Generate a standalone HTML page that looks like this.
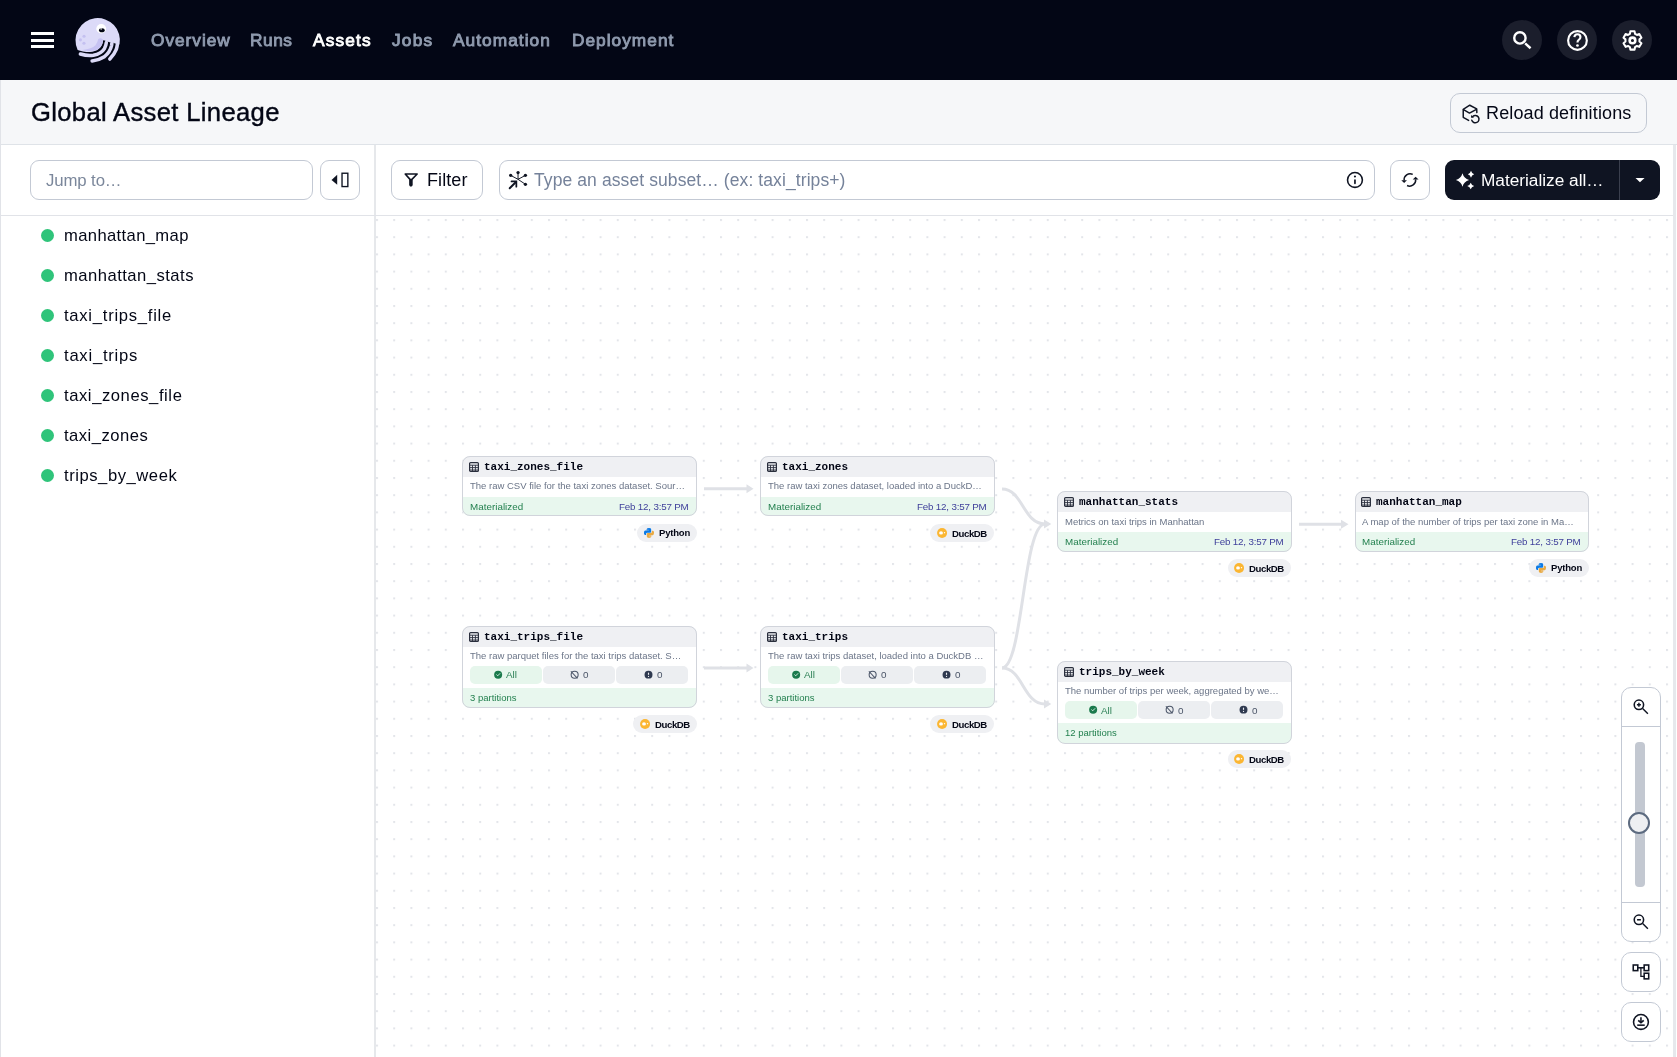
<!DOCTYPE html><html><head><meta charset="utf-8"><style>
*{box-sizing:border-box;margin:0;padding:0}
html,body{-webkit-font-smoothing:antialiased;width:1677px;height:1057px;overflow:hidden;background:#fff;font-family:"Liberation Sans",sans-serif;color:#030615}
.a{position:absolute;white-space:nowrap}
.t{will-change:transform}
svg.a{overflow:visible}
</style></head><body>
<div class="a" style="left:0;top:0;width:1677px;height:80px;background:#030615"></div>
<div class="a" style="left:31px;top:32px;width:23px;height:3px;background:#fff"></div>
<div class="a" style="left:31px;top:38.5px;width:23px;height:3px;background:#fff"></div>
<div class="a" style="left:31px;top:45px;width:23px;height:3px;background:#fff"></div>
<svg class="a" style="left:70px;top:12px" width="55" height="55" viewBox="0 0 1057 1057">
<path d="M147 728 A427 427 0 1 1 952 625 L880 612 Q840 585 760 580 Q700 565 640 540 C625 690 520 768 380 768 C290 768 200 750 147 728Z" fill="#dcdaf8"/>
<path d="M545 520 Q600 480 640 540 Q615 700 480 742 Q330 765 240 730 Q420 712 490 640 Q530 580 545 520Z" fill="#c6c2f2"/>
<g fill="none" stroke="#dcdaf8" stroke-width="68" stroke-linecap="round">
<path d="M200 808 Q330 848 450 833 Q600 803 662 703 Q692 643 698 588"/>
<path d="M425 940 Q560 925 660 860 Q770 770 800 640 L805 600"/>
<path d="M765 905 Q850 820 890 720 Q905 670 910 625"/>
</g>
<circle cx="270" cy="465" r="30" fill="#c4c0f0"/><circle cx="200" cy="535" r="30" fill="#c4c0f0"/><circle cx="268" cy="600" r="30" fill="#c4c0f0"/>
<ellipse cx="600" cy="322" rx="95" ry="90" fill="#fff"/>
<ellipse cx="612" cy="350" rx="55" ry="40" fill="#030615"/>
<circle cx="598" cy="328" r="14" fill="#fff"/>
</svg>
<div class="a t" style="left:150.50px;top:28.80px;font-size:17.3px;line-height:22px;color:#8f9aae;letter-spacing:0.966px;-webkit-text-stroke:0.9px #8f9aae;">Overview</div>
<div class="a t" style="left:250.00px;top:28.80px;font-size:17.3px;line-height:22px;color:#8f9aae;letter-spacing:0.535px;-webkit-text-stroke:0.9px #8f9aae;">Runs</div>
<div class="a t" style="left:312.90px;top:28.80px;font-size:17.3px;line-height:22px;color:#fff;letter-spacing:1.160px;-webkit-text-stroke:0.9px #fff;">Assets</div>
<div class="a t" style="left:392.10px;top:28.80px;font-size:17.3px;line-height:22px;color:#8f9aae;letter-spacing:1.199px;-webkit-text-stroke:0.9px #8f9aae;">Jobs</div>
<div class="a t" style="left:453.40px;top:28.80px;font-size:17.3px;line-height:22px;color:#8f9aae;letter-spacing:1.040px;-webkit-text-stroke:0.9px #8f9aae;">Automation</div>
<div class="a t" style="left:571.90px;top:28.80px;font-size:17.3px;line-height:22px;color:#8f9aae;letter-spacing:1.012px;-webkit-text-stroke:0.9px #8f9aae;">Deployment</div>
<div class="a" style="left:1502px;top:20px;width:40px;height:40px;border-radius:20px;background:#1b1e2c"></div>
<div class="a" style="left:1557px;top:20px;width:40px;height:40px;border-radius:20px;background:#1b1e2c"></div>
<div class="a" style="left:1612px;top:20px;width:40px;height:40px;border-radius:20px;background:#1b1e2c"></div>
<svg class="a" style="left:1507px;top:25px" width="30" height="30" viewBox="0 0 1057 1057"><circle cx="455" cy="455" r="200" fill="none" stroke="#fff" stroke-width="85"/><path d="M640 650 L830 820" stroke="#fff" stroke-width="85"/></svg>
<svg class="a" style="left:1562px;top:25px" width="30" height="30" viewBox="0 0 1057 1057"><circle cx="545" cy="545" r="330" fill="none" stroke="#fff" stroke-width="75"/><path d="M435 425 Q445 325 545 325 Q650 325 650 425 Q650 490 590 525 Q545 555 545 615" fill="none" stroke="#fff" stroke-width="75"/><circle cx="545" cy="722" r="48" fill="#fff"/></svg>
<svg class="a" style="left:1617px;top:25px" width="30" height="30" viewBox="0 0 1057 1057"><path d="M455 312 L471 223 L619 223 L635 312 L702 351 L786 320 L861 449 L792 506 L792 584 L861 641 L786 770 L702 739 L635 778 L619 867 L471 867 L455 778 L388 739 L304 770 L229 641 L298 584 L298 506 L229 449 L304 320 L388 351Z" fill="none" stroke="#fff" stroke-width="72" stroke-linejoin="round"/><circle cx="545" cy="545" r="100" fill="none" stroke="#fff" stroke-width="90"/></svg>
<div class="a" style="left:0;top:80px;width:1677px;height:65px;background:#f6f7f9;border-bottom:1px solid #dfe3e8"></div>
<div class="a" style="left:0;top:80px;width:1px;height:977px;background:#e1e3e8"></div>
<div class="a t" style="left:30.90px;top:95.72px;font-size:25.6px;line-height:32px;color:#030615;letter-spacing:0.341px;-webkit-text-stroke:0.4px #030615;">Global Asset Lineage</div>
<div class="a" style="left:1450px;top:93px;width:197px;height:40px;border:1px solid #c3c9d4;border-radius:10px;background:#f6f7f9"></div>
<div class="a t" style="left:1486.10px;top:101.76px;font-size:18px;line-height:22px;color:#030615;letter-spacing:0.129px;">Reload definitions</div>
<svg class="a" style="left:1455px;top:98px" width="30" height="30" viewBox="0 0 1057 1057"><g fill="none" stroke="#0f1422" stroke-width="52" stroke-linejoin="round" stroke-linecap="round"><path d="M480 790 L290 680 L290 400 L520 255 L765 385 L770 515"/><path d="M300 410 L510 530 L740 410"/><path d="M590 780 A130 130 0 1 0 625 650"/></g><path d="M565 595 L565 695 L670 695Z" fill="#0f1422"/></svg>
<div class="a" style="left:374px;top:145px;width:2px;height:912px;background:#e6e8eb"></div>
<div class="a" style="left:0;top:215px;width:1673px;height:1px;background:#e1e3e8"></div>
<div class="a" style="left:30px;top:160px;width:283px;height:40px;border:1px solid #c3c9d4;border-radius:9px;background:#fff"></div>
<div class="a t" style="left:46.10px;top:169.68px;font-size:16.8px;line-height:21px;color:#7b879b;letter-spacing:-0.118px;">Jump to…</div>
<div class="a" style="left:320px;top:160px;width:40px;height:40px;border:1px solid #c3c9d4;border-radius:9px;background:#fff"></div>
<svg class="a" style="left:325px;top:165px" width="30" height="30" viewBox="0 0 1057 1057"><path d="M430 340 L230 525 L430 700Z" fill="#0f1422"/><rect x="600" y="290" width="205" height="470" fill="none" stroke="#0f1422" stroke-width="48"/></svg>
<div class="a" style="left:41px;top:228.5px;width:13px;height:13px;border-radius:50%;background:#2fc47a"></div>
<div class="a t" style="left:63.50px;top:224.75px;font-size:16.6px;line-height:21px;color:#030615;letter-spacing:0.372px;">manhattan_map</div>
<div class="a" style="left:41px;top:268.5px;width:13px;height:13px;border-radius:50%;background:#2fc47a"></div>
<div class="a t" style="left:63.50px;top:264.75px;font-size:16.6px;line-height:21px;color:#030615;letter-spacing:0.482px;">manhattan_stats</div>
<div class="a" style="left:41px;top:308.5px;width:13px;height:13px;border-radius:50%;background:#2fc47a"></div>
<div class="a t" style="left:63.50px;top:304.75px;font-size:16.6px;line-height:21px;color:#030615;letter-spacing:0.746px;">taxi_trips_file</div>
<div class="a" style="left:41px;top:348.5px;width:13px;height:13px;border-radius:50%;background:#2fc47a"></div>
<div class="a t" style="left:63.50px;top:344.75px;font-size:16.6px;line-height:21px;color:#030615;letter-spacing:0.767px;">taxi_trips</div>
<div class="a" style="left:41px;top:388.5px;width:13px;height:13px;border-radius:50%;background:#2fc47a"></div>
<div class="a t" style="left:63.50px;top:384.75px;font-size:16.6px;line-height:21px;color:#030615;letter-spacing:0.578px;">taxi_zones_file</div>
<div class="a" style="left:41px;top:428.5px;width:13px;height:13px;border-radius:50%;background:#2fc47a"></div>
<div class="a t" style="left:63.50px;top:424.75px;font-size:16.6px;line-height:21px;color:#030615;letter-spacing:0.495px;">taxi_zones</div>
<div class="a" style="left:41px;top:468.5px;width:13px;height:13px;border-radius:50%;background:#2fc47a"></div>
<div class="a t" style="left:63.50px;top:464.75px;font-size:16.6px;line-height:21px;color:#030615;letter-spacing:0.554px;">trips_by_week</div>
<div class="a" style="left:391px;top:160px;width:92px;height:40px;border:1px solid #c3c9d4;border-radius:9px;background:#fff;"></div>
<div class="a t" style="left:426.90px;top:168.76px;font-size:18px;line-height:22px;color:#030615;letter-spacing:0.088px;">Filter</div>
<svg class="a" style="left:398px;top:165px" width="30" height="30" viewBox="0 0 1057 1057"><path d="M255 318 H675 L455 540Z" fill="none" stroke="#0f1422" stroke-width="58" stroke-linejoin="round"/><path d="M455 545 V700" stroke="#0f1422" stroke-width="125" stroke-linecap="round"/></svg>
<div class="a" style="left:498.5px;top:160px;width:876px;height:40px;border:1px solid #c3c9d4;border-radius:9px;background:#fff;"></div>
<div class="a t" style="left:534.30px;top:168.93px;font-size:17.5px;line-height:22px;color:#75829a;letter-spacing:0.094px;">Type an asset subset… (ex: taxi_trips+)</div>
<div class="a" style="left:1390px;top:160px;width:40px;height:40px;border:1px solid #c3c9d4;border-radius:9px;background:#fff;"></div>
<div class="a" style="left:1445px;top:160px;width:215px;height:40px;border-radius:9px;background:#0f1422;"></div>
<div class="a" style="left:1619px;top:160px;width:1px;height:40px;background:#3a3f4e"></div>
<div class="a t" style="left:1480.50px;top:169.02px;font-size:17.25px;line-height:22px;color:#fff;letter-spacing:-0.009px;">Materialize all…</div>
<svg class="a" style="left:503px;top:165px" width="30" height="30" viewBox="0 0 1057 1057"><g stroke="#0f1422" stroke-width="34"><path d="M530 505 L270 365 M530 505 L530 265 M530 505 L790 365 M530 505 L790 680"/></g><g fill="#0f1422"><circle cx="270" cy="365" r="58"/><circle cx="530" cy="265" r="58"/><circle cx="790" cy="365" r="58"/><circle cx="790" cy="680" r="58"/></g><path d="M235 820 L455 600" stroke="#0f1422" stroke-width="68" stroke-linecap="round"/><path d="M300 580 H470 V765" fill="none" stroke="#0f1422" stroke-width="62" stroke-linecap="round"/></svg>
<svg class="a" style="left:1340px;top:165px" width="30" height="30" viewBox="0 0 1057 1057"><circle cx="527" cy="527" r="262" fill="none" stroke="#0f1422" stroke-width="55"/><circle cx="527" cy="405" r="38" fill="#0f1422"/><rect x="497" y="500" width="60" height="175" rx="30" fill="#0f1422"/></svg>
<svg class="a" style="left:1395px;top:165px" width="30" height="30" viewBox="0 0 1057 1057"><g fill="none" stroke="#0f1422" stroke-width="52"><path d="M625 330 A212 212 0 0 0 322 545"/><path d="M425 722 A212 212 0 0 0 727 505"/></g><g fill="#0f1422"><path d="M222 538 H420 L322 636Z"/><path d="M625 512 H830 L727 410Z"/></g></svg>
<svg class="a" style="left:1450px;top:165px" width="30" height="30" viewBox="0 0 1057 1057"><g fill="#fff"><path d="M440 287 Q491 473 672 525 Q491 577 440 763 Q389 577 208 525 Q389 473 440 287Z"/><path d="M740 206 Q765 301 852 328 Q765 355 740 450 Q715 355 628 328 Q715 301 740 206Z"/><path d="M730 628 Q757 715 852 740 Q757 765 730 852 Q703 765 608 740 Q703 715 730 628Z"/></g></svg>
<svg class="a" style="left:1625px;top:165px" width="30" height="30" viewBox="0 0 1057 1057"><path d="M370 455 H690 L527 612Z" fill="#fff"/></svg>
<svg class="a" style="left:376px;top:216px" width="1297" height="841">
  <defs>
    <pattern id="dots" x="0" y="3" width="17.2" height="17.2" patternUnits="userSpaceOnUse">
      <rect x="0" y="0" width="2" height="2" fill="#e3e5ea"/>
    </pattern>
  </defs>
  <rect x="0" y="0" width="1297" height="841" fill="url(#dots)"/>
</svg>
<svg class="a" style="left:0;top:0" width="1677" height="1057">
  <g fill="none" stroke="#dfe1e6" stroke-width="3">
    <path d="M704 488.8 H747"/>
    <path d="M1002 489 C1023 489 1023 524 1045 524"/>
    <path d="M1002 668 C1023 668 1023 524 1045 524"/>
    <path d="M1002 668 C1023 668 1023 704 1045 704"/>
    <path d="M1299 524.2 H1342"/>
    <path d="M704 668 H747"/>
  </g>
  <g fill="#dfe1e6">
    <path d="M746.5 484.3 L753.5 488.8 L746.5 493.3Z"/>
    <path d="M1044 519.5 L1051.3 524 L1044 528.5Z"/>
    <path d="M1044 699.5 L1051.3 704 L1044 708.5Z"/>
    <path d="M1341 519.7 L1348.5 524.2 L1341 528.7Z"/>
    <path d="M746.5 663.5 L753.5 668 L746.5 672.5Z"/>
  </g>
</svg>
<div class="a" style="left:462.3px;top:456px;width:234.4px;height:60.4px;border-radius:8px;background:#fff;overflow:hidden">
<div class="a" style="left:0;top:0;width:100%;height:20.7px;background:#eff0f3"></div>
<div class="a" style="left:0;top:40.7px;width:100%;height:20px;background:#e8f7ee"></div>
</div>
<div class="a" style="left:462.3px;top:456px;width:234.4px;height:60.4px;border-radius:8px;border:1.6px solid #d1d4db"></div>
<svg class="a" style="left:469.2px;top:461.9px" width="10" height="10" viewBox="0 0 10 10"><rect x="0.6" y="0.6" width="8.8" height="8.8" rx="1" fill="none" stroke="#2a2f3d" stroke-width="1.2"/><path d="M0.6 3.2H9.4M0.6 5.6H9.4M0.6 8H9.4M3.5 3.2V9.4M6.4 3.2V9.4" stroke="#2a2f3d" stroke-width="0.9"/></svg>
<div class="a t" style="left:484.10px;top:459.97px;font-size:11px;line-height:14px;color:#030615;font-weight:bold;font-family:'Liberation Mono',monospace;">taxi_zones_file</div>
<div class="a t" style="left:470.20px;top:480.41px;font-size:9.5px;line-height:12px;color:#6b7588;">The raw CSV file for the taxi zones dataset. Sour…</div>
<div class="a t" style="left:470.00px;top:500.80px;font-size:9.8px;line-height:12px;color:#23804f;letter-spacing:0.034px;">Materialized</div>
<div class="a t" style="left:619.10px;top:500.80px;font-size:9.8px;line-height:12px;color:#3e3f9a;letter-spacing:-0.191px;">Feb 12, 3:57 PM</div>
<div class="a" style="left:760.4px;top:456px;width:234.4px;height:60.4px;border-radius:8px;background:#fff;overflow:hidden">
<div class="a" style="left:0;top:0;width:100%;height:20.7px;background:#eff0f3"></div>
<div class="a" style="left:0;top:40.7px;width:100%;height:20px;background:#e8f7ee"></div>
</div>
<div class="a" style="left:760.4px;top:456px;width:234.4px;height:60.4px;border-radius:8px;border:1.6px solid #d1d4db"></div>
<svg class="a" style="left:767.3px;top:461.9px" width="10" height="10" viewBox="0 0 10 10"><rect x="0.6" y="0.6" width="8.8" height="8.8" rx="1" fill="none" stroke="#2a2f3d" stroke-width="1.2"/><path d="M0.6 3.2H9.4M0.6 5.6H9.4M0.6 8H9.4M3.5 3.2V9.4M6.4 3.2V9.4" stroke="#2a2f3d" stroke-width="0.9"/></svg>
<div class="a t" style="left:782.20px;top:459.97px;font-size:11px;line-height:14px;color:#030615;font-weight:bold;font-family:'Liberation Mono',monospace;">taxi_zones</div>
<div class="a t" style="left:768.30px;top:480.41px;font-size:9.5px;line-height:12px;color:#6b7588;">The raw taxi zones dataset, loaded into a DuckD…</div>
<div class="a t" style="left:768.10px;top:500.80px;font-size:9.8px;line-height:12px;color:#23804f;letter-spacing:0.034px;">Materialized</div>
<div class="a t" style="left:917.20px;top:500.80px;font-size:9.8px;line-height:12px;color:#3e3f9a;letter-spacing:-0.191px;">Feb 12, 3:57 PM</div>
<div class="a" style="left:1057.3px;top:491.3px;width:234.4px;height:60.4px;border-radius:8px;background:#fff;overflow:hidden">
<div class="a" style="left:0;top:0;width:100%;height:20.7px;background:#eff0f3"></div>
<div class="a" style="left:0;top:40.7px;width:100%;height:20px;background:#e8f7ee"></div>
</div>
<div class="a" style="left:1057.3px;top:491.3px;width:234.4px;height:60.4px;border-radius:8px;border:1.6px solid #d1d4db"></div>
<svg class="a" style="left:1064.2px;top:497.2px" width="10" height="10" viewBox="0 0 10 10"><rect x="0.6" y="0.6" width="8.8" height="8.8" rx="1" fill="none" stroke="#2a2f3d" stroke-width="1.2"/><path d="M0.6 3.2H9.4M0.6 5.6H9.4M0.6 8H9.4M3.5 3.2V9.4M6.4 3.2V9.4" stroke="#2a2f3d" stroke-width="0.9"/></svg>
<div class="a t" style="left:1079.10px;top:495.27px;font-size:11px;line-height:14px;color:#030615;font-weight:bold;font-family:'Liberation Mono',monospace;">manhattan_stats</div>
<div class="a t" style="left:1065.20px;top:515.71px;font-size:9.5px;line-height:12px;color:#6b7588;">Metrics on taxi trips in Manhattan</div>
<div class="a t" style="left:1065.00px;top:536.10px;font-size:9.8px;line-height:12px;color:#23804f;letter-spacing:0.034px;">Materialized</div>
<div class="a t" style="left:1214.10px;top:536.10px;font-size:9.8px;line-height:12px;color:#3e3f9a;letter-spacing:-0.191px;">Feb 12, 3:57 PM</div>
<div class="a" style="left:1354.5px;top:491.3px;width:234.4px;height:60.4px;border-radius:8px;background:#fff;overflow:hidden">
<div class="a" style="left:0;top:0;width:100%;height:20.7px;background:#eff0f3"></div>
<div class="a" style="left:0;top:40.7px;width:100%;height:20px;background:#e8f7ee"></div>
</div>
<div class="a" style="left:1354.5px;top:491.3px;width:234.4px;height:60.4px;border-radius:8px;border:1.6px solid #d1d4db"></div>
<svg class="a" style="left:1361.4px;top:497.2px" width="10" height="10" viewBox="0 0 10 10"><rect x="0.6" y="0.6" width="8.8" height="8.8" rx="1" fill="none" stroke="#2a2f3d" stroke-width="1.2"/><path d="M0.6 3.2H9.4M0.6 5.6H9.4M0.6 8H9.4M3.5 3.2V9.4M6.4 3.2V9.4" stroke="#2a2f3d" stroke-width="0.9"/></svg>
<div class="a t" style="left:1376.30px;top:495.27px;font-size:11px;line-height:14px;color:#030615;font-weight:bold;font-family:'Liberation Mono',monospace;">manhattan_map</div>
<div class="a t" style="left:1362.40px;top:515.71px;font-size:9.5px;line-height:12px;color:#6b7588;">A map of the number of trips per taxi zone in Ma…</div>
<div class="a t" style="left:1362.20px;top:536.10px;font-size:9.8px;line-height:12px;color:#23804f;letter-spacing:0.034px;">Materialized</div>
<div class="a t" style="left:1511.30px;top:536.10px;font-size:9.8px;line-height:12px;color:#3e3f9a;letter-spacing:-0.191px;">Feb 12, 3:57 PM</div>
<div class="a" style="left:462.3px;top:626px;width:234.4px;height:82.4px;border-radius:8px;background:#fff;overflow:hidden">
<div class="a" style="left:0;top:0;width:100%;height:20.7px;background:#eff0f3"></div>
<div class="a" style="left:0;top:62px;width:100%;height:20px;background:#e8f7ee"></div>
</div>
<div class="a" style="left:462.3px;top:626px;width:234.4px;height:82.4px;border-radius:8px;border:1.6px solid #d1d4db"></div>
<svg class="a" style="left:469.2px;top:631.9px" width="10" height="10" viewBox="0 0 10 10"><rect x="0.6" y="0.6" width="8.8" height="8.8" rx="1" fill="none" stroke="#2a2f3d" stroke-width="1.2"/><path d="M0.6 3.2H9.4M0.6 5.6H9.4M0.6 8H9.4M3.5 3.2V9.4M6.4 3.2V9.4" stroke="#2a2f3d" stroke-width="0.9"/></svg>
<div class="a t" style="left:484.10px;top:629.97px;font-size:11px;line-height:14px;color:#030615;font-weight:bold;font-family:'Liberation Mono',monospace;">taxi_trips_file</div>
<div class="a t" style="left:470.20px;top:649.71px;font-size:9.5px;line-height:12px;color:#6b7588;">The raw parquet files for the taxi trips dataset. S…</div>
<div class="a" style="left:470.00px;top:666px;width:71.6px;height:17.6px;border-radius:5px;background:#e6f6ec"></div>
<div class="a" style="left:543.10px;top:666px;width:71.6px;height:17.6px;border-radius:5px;background:#eceef1"></div>
<div class="a" style="left:616.20px;top:666px;width:71.6px;height:17.6px;border-radius:5px;background:#eceef1"></div>
<div class="a t" style="left:470.20px;top:691.61px;font-size:9.5px;line-height:12px;color:#23804f;">3 partitions</div>
<svg class="a" style="left:490.0px;top:665px" width="30" height="20" viewBox="0 0 1586 1057"><circle cx="430" cy="510" r="212" fill="#1a7a4c"/><path d="M340 505 L410 570 L535 440" fill="none" stroke="#e6f6ec" stroke-width="48"/></svg>
<div class="a t" style="left:506.10px;top:669.47px;font-size:9.9px;line-height:12px;color:#2e8157;">All</div>
<svg class="a" style="left:565.0px;top:665px" width="30" height="20" viewBox="0 0 1586 1057"><circle cx="510" cy="510" r="185" fill="none" stroke="#4b5568" stroke-width="55"/><path d="M310 330 L660 710" stroke="#4b5568" stroke-width="55"/></svg>
<div class="a t" style="left:583.00px;top:669.47px;font-size:9.9px;line-height:12px;color:#4b5568;">0</div>
<svg class="a" style="left:640.0px;top:665px" width="30" height="20" viewBox="0 0 1586 1057"><circle cx="450" cy="510" r="210" fill="#2f3a50"/><path d="M450 405 V520" stroke="#eceef1" stroke-width="60"/><circle cx="450" cy="605" r="32" fill="#eceef1"/></svg>
<div class="a t" style="left:656.80px;top:669.47px;font-size:9.9px;line-height:12px;color:#4b5568;">0</div>
<div class="a" style="left:760.4px;top:626px;width:234.4px;height:82.4px;border-radius:8px;background:#fff;overflow:hidden">
<div class="a" style="left:0;top:0;width:100%;height:20.7px;background:#eff0f3"></div>
<div class="a" style="left:0;top:62px;width:100%;height:20px;background:#e8f7ee"></div>
</div>
<div class="a" style="left:760.4px;top:626px;width:234.4px;height:82.4px;border-radius:8px;border:1.6px solid #d1d4db"></div>
<svg class="a" style="left:767.3px;top:631.9px" width="10" height="10" viewBox="0 0 10 10"><rect x="0.6" y="0.6" width="8.8" height="8.8" rx="1" fill="none" stroke="#2a2f3d" stroke-width="1.2"/><path d="M0.6 3.2H9.4M0.6 5.6H9.4M0.6 8H9.4M3.5 3.2V9.4M6.4 3.2V9.4" stroke="#2a2f3d" stroke-width="0.9"/></svg>
<div class="a t" style="left:782.20px;top:629.97px;font-size:11px;line-height:14px;color:#030615;font-weight:bold;font-family:'Liberation Mono',monospace;">taxi_trips</div>
<div class="a t" style="left:768.30px;top:649.71px;font-size:9.5px;line-height:12px;color:#6b7588;">The raw taxi trips dataset, loaded into a DuckDB …</div>
<div class="a" style="left:768.10px;top:666px;width:71.6px;height:17.6px;border-radius:5px;background:#e6f6ec"></div>
<div class="a" style="left:841.20px;top:666px;width:71.6px;height:17.6px;border-radius:5px;background:#eceef1"></div>
<div class="a" style="left:914.30px;top:666px;width:71.6px;height:17.6px;border-radius:5px;background:#eceef1"></div>
<div class="a t" style="left:768.30px;top:691.61px;font-size:9.5px;line-height:12px;color:#23804f;">3 partitions</div>
<svg class="a" style="left:788.0999999999999px;top:665px" width="30" height="20" viewBox="0 0 1586 1057"><circle cx="430" cy="510" r="212" fill="#1a7a4c"/><path d="M340 505 L410 570 L535 440" fill="none" stroke="#e6f6ec" stroke-width="48"/></svg>
<div class="a t" style="left:804.20px;top:669.47px;font-size:9.9px;line-height:12px;color:#2e8157;">All</div>
<svg class="a" style="left:863.0999999999999px;top:665px" width="30" height="20" viewBox="0 0 1586 1057"><circle cx="510" cy="510" r="185" fill="none" stroke="#4b5568" stroke-width="55"/><path d="M310 330 L660 710" stroke="#4b5568" stroke-width="55"/></svg>
<div class="a t" style="left:881.10px;top:669.47px;font-size:9.9px;line-height:12px;color:#4b5568;">0</div>
<svg class="a" style="left:938.0999999999999px;top:665px" width="30" height="20" viewBox="0 0 1586 1057"><circle cx="450" cy="510" r="210" fill="#2f3a50"/><path d="M450 405 V520" stroke="#eceef1" stroke-width="60"/><circle cx="450" cy="605" r="32" fill="#eceef1"/></svg>
<div class="a t" style="left:954.90px;top:669.47px;font-size:9.9px;line-height:12px;color:#4b5568;">0</div>
<div class="a" style="left:1057.3px;top:661.3px;width:234.4px;height:82.4px;border-radius:8px;background:#fff;overflow:hidden">
<div class="a" style="left:0;top:0;width:100%;height:20.7px;background:#eff0f3"></div>
<div class="a" style="left:0;top:62px;width:100%;height:20px;background:#e8f7ee"></div>
</div>
<div class="a" style="left:1057.3px;top:661.3px;width:234.4px;height:82.4px;border-radius:8px;border:1.6px solid #d1d4db"></div>
<svg class="a" style="left:1064.2px;top:667.1999999999999px" width="10" height="10" viewBox="0 0 10 10"><rect x="0.6" y="0.6" width="8.8" height="8.8" rx="1" fill="none" stroke="#2a2f3d" stroke-width="1.2"/><path d="M0.6 3.2H9.4M0.6 5.6H9.4M0.6 8H9.4M3.5 3.2V9.4M6.4 3.2V9.4" stroke="#2a2f3d" stroke-width="0.9"/></svg>
<div class="a t" style="left:1079.10px;top:665.27px;font-size:11px;line-height:14px;color:#030615;font-weight:bold;font-family:'Liberation Mono',monospace;">trips_by_week</div>
<div class="a t" style="left:1065.20px;top:685.01px;font-size:9.5px;line-height:12px;color:#6b7588;">The number of trips per week, aggregated by we…</div>
<div class="a" style="left:1065.00px;top:701.3px;width:71.6px;height:17.6px;border-radius:5px;background:#e6f6ec"></div>
<div class="a" style="left:1138.10px;top:701.3px;width:71.6px;height:17.6px;border-radius:5px;background:#eceef1"></div>
<div class="a" style="left:1211.20px;top:701.3px;width:71.6px;height:17.6px;border-radius:5px;background:#eceef1"></div>
<div class="a t" style="left:1065.20px;top:726.91px;font-size:9.5px;line-height:12px;color:#23804f;">12 partitions</div>
<svg class="a" style="left:1085.0px;top:700.3px" width="30" height="20" viewBox="0 0 1586 1057"><circle cx="430" cy="510" r="212" fill="#1a7a4c"/><path d="M340 505 L410 570 L535 440" fill="none" stroke="#e6f6ec" stroke-width="48"/></svg>
<div class="a t" style="left:1101.10px;top:704.77px;font-size:9.9px;line-height:12px;color:#2e8157;">All</div>
<svg class="a" style="left:1160.0px;top:700.3px" width="30" height="20" viewBox="0 0 1586 1057"><circle cx="510" cy="510" r="185" fill="none" stroke="#4b5568" stroke-width="55"/><path d="M310 330 L660 710" stroke="#4b5568" stroke-width="55"/></svg>
<div class="a t" style="left:1178.00px;top:704.77px;font-size:9.9px;line-height:12px;color:#4b5568;">0</div>
<svg class="a" style="left:1235.0px;top:700.3px" width="30" height="20" viewBox="0 0 1586 1057"><circle cx="450" cy="510" r="210" fill="#2f3a50"/><path d="M450 405 V520" stroke="#eceef1" stroke-width="60"/><circle cx="450" cy="605" r="32" fill="#eceef1"/></svg>
<div class="a t" style="left:1251.80px;top:704.77px;font-size:9.9px;line-height:12px;color:#4b5568;">0</div>
<div class="a" style="left:637px;top:524px;width:60.0px;height:18px;border-radius:9px;background:#eff0f3"></div>
<div class="a t" style="left:658.70px;top:527.11px;font-size:9.5px;line-height:12px;color:#030615;font-weight:bold;letter-spacing:-0.181px;">Python</div>
<svg class="a" style="left:640px;top:523px" width="20" height="20" viewBox="0 0 1057 1057"><path d="M470 258 Q590 258 590 330 V465 Q590 520 535 520 H385 Q322 520 322 585 V640 H275 Q208 640 208 528 Q208 402 280 402 H470 V382 H352 V330 Q352 258 470 258Z" fill="#0b7ae6"/><path d="M470 258 Q590 258 590 330 V465 Q590 520 535 520 H385 Q322 520 322 585 V640 H275 Q208 640 208 528 Q208 402 280 402 H470 V382 H352 V330 Q352 258 470 258Z" fill="#e8a942" transform="rotate(180 475 524)"/><circle cx="420" cy="320" r="22" fill="#eff0f3"/><circle cx="530" cy="728" r="22" fill="#eff0f3"/></svg>
<div class="a" style="left:930.3px;top:524px;width:63.7px;height:18px;border-radius:9px;background:#eff0f3"></div>
<div class="a t" style="left:951.80px;top:528.07px;font-size:9.6px;line-height:12px;color:#030615;font-weight:bold;letter-spacing:-0.409px;">DuckDB</div>
<svg class="a" style="left:931px;top:523.3px" width="20" height="20" viewBox="0 0 1057 1057"><circle cx="585" cy="525" r="265" fill="#fbb632"/><ellipse cx="530" cy="522" rx="102" ry="88" fill="#fff"/><circle cx="715" cy="510" r="38" fill="#fff"/></svg>
<div class="a" style="left:1227.6px;top:559px;width:63.7px;height:18px;border-radius:9px;background:#eff0f3"></div>
<div class="a t" style="left:1249.10px;top:563.07px;font-size:9.6px;line-height:12px;color:#030615;font-weight:bold;letter-spacing:-0.409px;">DuckDB</div>
<svg class="a" style="left:1228.3px;top:558.3px" width="20" height="20" viewBox="0 0 1057 1057"><circle cx="585" cy="525" r="265" fill="#fbb632"/><ellipse cx="530" cy="522" rx="102" ry="88" fill="#fff"/><circle cx="715" cy="510" r="38" fill="#fff"/></svg>
<div class="a" style="left:1528.5px;top:559px;width:60.5px;height:18px;border-radius:9px;background:#eff0f3"></div>
<div class="a t" style="left:1550.70px;top:562.11px;font-size:9.5px;line-height:12px;color:#030615;font-weight:bold;letter-spacing:-0.181px;">Python</div>
<svg class="a" style="left:1532px;top:558px" width="20" height="20" viewBox="0 0 1057 1057"><path d="M470 258 Q590 258 590 330 V465 Q590 520 535 520 H385 Q322 520 322 585 V640 H275 Q208 640 208 528 Q208 402 280 402 H470 V382 H352 V330 Q352 258 470 258Z" fill="#0b7ae6"/><path d="M470 258 Q590 258 590 330 V465 Q590 520 535 520 H385 Q322 520 322 585 V640 H275 Q208 640 208 528 Q208 402 280 402 H470 V382 H352 V330 Q352 258 470 258Z" fill="#e8a942" transform="rotate(180 475 524)"/><circle cx="420" cy="320" r="22" fill="#eff0f3"/><circle cx="530" cy="728" r="22" fill="#eff0f3"/></svg>
<div class="a" style="left:633px;top:714.7px;width:64.0px;height:18px;border-radius:9px;background:#eff0f3"></div>
<div class="a t" style="left:654.80px;top:718.77px;font-size:9.6px;line-height:12px;color:#030615;font-weight:bold;letter-spacing:-0.409px;">DuckDB</div>
<svg class="a" style="left:634px;top:714.0px" width="20" height="20" viewBox="0 0 1057 1057"><circle cx="585" cy="525" r="265" fill="#fbb632"/><ellipse cx="530" cy="522" rx="102" ry="88" fill="#fff"/><circle cx="715" cy="510" r="38" fill="#fff"/></svg>
<div class="a" style="left:930.3px;top:715px;width:63.7px;height:18px;border-radius:9px;background:#eff0f3"></div>
<div class="a t" style="left:951.80px;top:719.07px;font-size:9.6px;line-height:12px;color:#030615;font-weight:bold;letter-spacing:-0.409px;">DuckDB</div>
<svg class="a" style="left:931px;top:714.3px" width="20" height="20" viewBox="0 0 1057 1057"><circle cx="585" cy="525" r="265" fill="#fbb632"/><ellipse cx="530" cy="522" rx="102" ry="88" fill="#fff"/><circle cx="715" cy="510" r="38" fill="#fff"/></svg>
<div class="a" style="left:1227.6px;top:750px;width:63.7px;height:18px;border-radius:9px;background:#eff0f3"></div>
<div class="a t" style="left:1249.10px;top:754.07px;font-size:9.6px;line-height:12px;color:#030615;font-weight:bold;letter-spacing:-0.409px;">DuckDB</div>
<svg class="a" style="left:1228.3px;top:749.3px" width="20" height="20" viewBox="0 0 1057 1057"><circle cx="585" cy="525" r="265" fill="#fbb632"/><ellipse cx="530" cy="522" rx="102" ry="88" fill="#fff"/><circle cx="715" cy="510" r="38" fill="#fff"/></svg>
<div class="a" style="left:1621px;top:687px;width:40px;height:255px;border:1px solid #c3c9d4;border-radius:10px;background:#fff;"></div>
<div class="a" style="left:1621px;top:726px;width:40px;height:1px;background:#c3c9d4"></div>
<div class="a" style="left:1621px;top:902px;width:40px;height:1px;background:#c3c9d4"></div>
<div class="a" style="left:1635px;top:742px;width:10px;height:145px;border-radius:4px;background:#c3c8d1"></div>
<div class="a" style="left:1628px;top:811.7px;width:22px;height:22px;border-radius:50%;background:#eeeff2;border:2px solid #5d6b80"></div>
<div class="a" style="left:1621px;top:952px;width:40px;height:40px;border:1px solid #c3c9d4;border-radius:10px;background:#fff;"></div>
<div class="a" style="left:1621px;top:1002px;width:40px;height:40px;border:1px solid #c3c9d4;border-radius:10px;background:#fff;"></div>
<svg class="a" style="left:1626px;top:692px" width="30" height="30" viewBox="0 0 1057 1057"><circle cx="455" cy="450" r="165" fill="none" stroke="#0f1422" stroke-width="55"/><path d="M585 585 L770 765" stroke="#0f1422" stroke-width="50"/><path d="M455 380 V520 M385 450 H525" stroke="#0f1422" stroke-width="50"/></svg>
<svg class="a" style="left:1626px;top:907px" width="30" height="30" viewBox="0 0 1057 1057"><circle cx="455" cy="450" r="165" fill="none" stroke="#0f1422" stroke-width="55"/><path d="M585 585 L770 765" stroke="#0f1422" stroke-width="50"/><path d="M390 450 H525" stroke="#0f1422" stroke-width="55"/></svg>
<svg class="a" style="left:1626px;top:957px" width="30" height="30" viewBox="0 0 1057 1057"><g fill="none" stroke="#0f1422" stroke-width="55"><rect x="255" y="282" width="160" height="198"/><rect x="640" y="282" width="160" height="198"/><rect x="640" y="572" width="160" height="198"/><path d="M415 380 H640"/></g><path d="M525 380 V680 H640" fill="none" stroke="#0f1422" stroke-width="45"/></svg>
<svg class="a" style="left:1626px;top:1007px" width="30" height="30" viewBox="0 0 1057 1057"><circle cx="527" cy="527" r="262" fill="none" stroke="#0f1422" stroke-width="55"/><path d="M527 360 V530" stroke="#0f1422" stroke-width="55"/><path d="M430 470 L527 550 L625 470" fill="none" stroke="#0f1422" stroke-width="62"/><path d="M395 640 H660" stroke="#0f1422" stroke-width="55"/></svg>
<div class="a" style="left:1673px;top:145px;width:3px;height:912px;background:#e6e8ec"></div>
</body></html>
